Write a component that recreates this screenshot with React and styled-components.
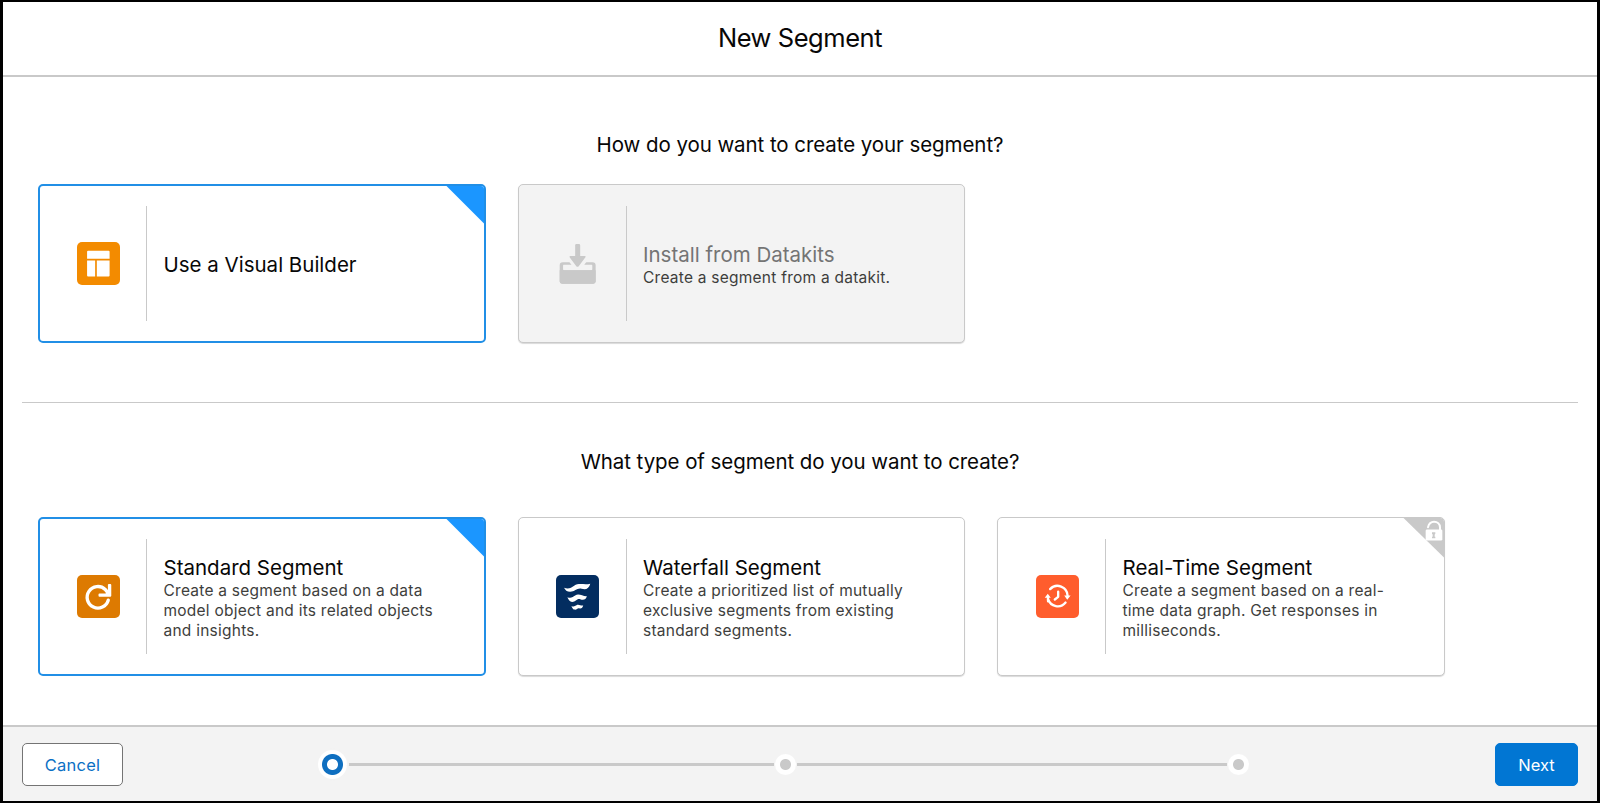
import React from 'react'
import styled, { createGlobalStyle } from 'styled-components'

const VisualBuilderIcon = () => (
  <Svg viewBox="0 0 128 128">
    <path fill="#fff" d="M33 26h61a3 3 0 0 1 3 3v21H30V29a3 3 0 0 1 3-3zM30 55h24v48H33a3 3 0 0 1-3-3zM59 55h38v45a3 3 0 0 1-3 3H59z" />
  </Svg>
)

const DatakitIcon = () => (
  <Svg viewBox="0 0 128 128">
    <g fill="#c9c9c9">
      <path d="M57 10q0-4 4-4h7q4 0 4 4v32h14q4 1 1 4L67 73q-3 2-6 0L41 46q-2-4 1-4h15z" />
      <path d="M20 60h20l6 8H23q-2 0-2 3v10q0 3 3 3h81q3 0 3-3V71q0-3-2-3H84l6-8h19q9 0 9 9v48q0 7-7 7H18q-7 0-7-7V69q0-9 9-9z" />
      <path d="M11 84h107v33q0 7-7 7H18q-7 0-7-7z" />
    </g>
  </Svg>
)

const RefreshIcon = () => (
  <Svg viewBox="0 0 128 128">
    <path d="M93 75A32 32 0 1 1 84 43L93 54" fill="none" stroke="#fff" strokeWidth="10" strokeLinecap="round" />
    <path fill="#fff" d="M92 29q0-2 3-2h4q3 0 3 3v32q0 3-3 3H67q-3 0-3-3v-4q0-3 3-3h18l7-8z" />
  </Svg>
)

const WaterfallIcon = () => (
  <Svg viewBox="0 0 128 128">
    <g fill="#fff">
      <path d="M24 38C36 43 45 39 54 32C69 22 84 31 102 26C98 40 90 45 76 41C62 38 57 50 42 50C33 50 27 45 24 38z" />
      <path d="M34 66C44 70 50 66 57 61C68 53 79 64 92 63C89 73 82 76 72 72C62 69 59 80 48 80C41 79 37 74 34 66z" />
      <path d="M46 92C52 95 56 93 61 90C67 86 73 92 81 91C79 98 75 101 69 99C64 97 62 104 56 103C51 103 48 98 46 92z" />
    </g>
  </Svg>
)

const RealTimeIcon = () => (
  <Svg viewBox="0 0 128 128">
    <g fill="none" stroke="#fff" strokeWidth="7" strokeLinecap="round" strokeLinejoin="round">
      <path d="M36 78A30 30 0 0 1 36 66M42 42A30 30 0 0 1 94 62M88 82A30 30 0 0 1 36 72" />
      <path d="M66 50V65L56 73" />
    </g>
    <path fill="#fff" d="M26 68L35 56L44 68zM84 61H103L93 74z" />
  </Svg>
)

const LockIcon = () => (
  <LockSvg viewBox="0 0 54 62">
    <path d="M9 21C12 9 19 5 27 5C37 5 45 11 45 22V30" fill="none" stroke="#fff" strokeWidth="6" strokeLinecap="round" />
    <rect x="2" y="28" width="50" height="33" rx="4" fill="#fff" />
    <path d="M21 36h10v5l-2 2v7h2v4H21v-4h2v-7l-2-2z" fill="#c9c9c9" />
  </LockSvg>
)

const methods = [
  { title: 'Use a Visual Builder', icon: <VisualBuilderIcon />, color: '#f38b00', selected: true },
  {
    title: 'Install from Datakits',
    lines: ['Create a segment from a datakit.'],
    icon: <DatakitIcon />,
    color: 'transparent',
    disabled: true
  }
]

const types = [
  {
    title: 'Standard Segment',
    lines: ['Create a segment based on a data', 'model object and its related objects', 'and insights.'],
    icon: <RefreshIcon />,
    color: '#dd7a01',
    selected: true
  },
  {
    title: 'Waterfall Segment',
    lines: ['Create a prioritized list of mutually', 'exclusive segments from existing', 'standard segments.'],
    icon: <WaterfallIcon />,
    color: '#032d60'
  },
  {
    title: 'Real-Time Segment',
    lines: ['Create a segment based on a real-', 'time data graph. Get responses in', 'milliseconds.'],
    icon: <RealTimeIcon />,
    color: '#ff5d2d',
    locked: true
  }
]

const OptionCard = ({ title, lines = [], icon, color, selected, disabled, locked }) => (
  <Card $selected={selected} $disabled={disabled}>
    <IconCell>
      <IconTile $color={color}>{icon}</IconTile>
    </IconCell>
    <CardText>
      <CardTitle $disabled={disabled}>{title}</CardTitle>
      {lines.map((line) => <CardLine key={line}>{line}</CardLine>)}
    </CardText>
    {(selected || locked) && <Corner $selected={selected} />}
    {locked && <LockIcon />}
  </Card>
)

const App = () => {
  return (
    <Modal>
      <GlobalStyle />
      <Header>
        <Heading>New Segment</Heading>
      </Header>
      <Main>
        <Question>How do you want to create your segment?</Question>
        <Cards>
          {methods.map((item) => <OptionCard key={item.title} {...item} />)}
        </Cards>
        <Divider />
        <Question $second>What type of segment do you want to create?</Question>
        <Cards>
          {types.map((item) => <OptionCard key={item.title} {...item} />)}
        </Cards>
      </Main>
      <Footer>
        <Button>Cancel</Button>
        <Steps>
          <Step $active />
          <StepLine />
          <Step />
          <StepLine />
          <Step />
        </Steps>
        <Button $primary>Next</Button>
      </Footer>
    </Modal>
  )
}

export default App

const GlobalStyle = createGlobalStyle`
  * {
    box-sizing: border-box;
  }
  body {
    margin: 0;
    background: #fff;
    font-family: Inter, "Liberation Sans", sans-serif;
  }
  h1, h2, h3, p {
    margin: 0;
    font-weight: 400;
    white-space: nowrap;
  }
`

const Modal = styled.div`
  display: flex;
  flex-direction: column;
  width: 1600px;
  height: 803px;
  border: 3px solid #000;
  border-top-width: 2px;
  border-bottom-width: 2px;
  overflow: hidden;
`

const Header = styled.header`
  display: flex;
  align-items: center;
  justify-content: center;
  height: 75px;
  padding-bottom: 1px;
  border-bottom: 2px solid #c9c9c9;
`

const Heading = styled.h1`
  font-size: 25.5px;
  line-height: 34px;
  letter-spacing: -0.45px;
  color: #080707;
`

const Main = styled.main`
  flex: 1;
  padding: 55px 19px 0;
`

const Question = styled.h2`
  font-size: 20.5px;
  line-height: 26px;
  letter-spacing: -0.07px;
  text-align: center;
  color: #080707;
  margin-bottom: ${({ $second }) => ($second ? '42px' : '26px')};
`

const Cards = styled.section`
  display: flex;
  gap: 32px;
  padding-left: 16px;
`

const Card = styled.article`
  position: relative;
  display: flex;
  align-items: center;
  width: 447.5px;
  height: 159px;
  border-radius: 5px;
  border: ${({ $selected }) => ($selected ? '2px solid #218fe6' : '1px solid #c9c9c9')};
  background: ${({ $disabled }) => ($disabled ? '#f3f3f3' : '#fff')};
  box-shadow: ${({ $selected }) => ($selected ? 'none' : '0 1px 1px rgba(0, 0, 0, 0.15)')};
  padding-left: ${({ $selected }) => ($selected ? '0' : '1px')};
  overflow: hidden;
`

const IconCell = styled.div`
  display: flex;
  align-items: center;
  width: 107px;
  height: 115px;
  padding-left: 36.6px;
  border-right: 1px solid #c9c9c9;
`

const IconTile = styled.div`
  width: 43px;
  height: 43px;
  border-radius: 5px;
  background: ${({ $color }) => $color};
`

const Svg = styled.svg`
  display: block;
  width: 43px;
  height: 43px;
`

const CardText = styled.div`
  padding: 3px 0 0 16.5px;
`

const CardTitle = styled.h3`
  font-size: 20.5px;
  line-height: 26px;
  color: ${({ $disabled }) => ($disabled ? '#747474' : '#080707')};
`

const CardLine = styled.p`
  font-size: 15.5px;
  line-height: 20px;
  letter-spacing: 0.24px;
  color: #3e3e3c;
`

const Corner = styled.span`
  position: absolute;
  top: -1px;
  right: -1px;
  width: ${({ $selected }) => ($selected ? '39px' : '42px')};
  height: ${({ $selected }) => ($selected ? '39px' : '41px')};
  clip-path: polygon(0 0, 100% 0, 100% 100%);
  background: ${({ $selected }) => ($selected ? '#1b96ff' : '#c9c9c9')};
`

const LockSvg = styled.svg`
  position: absolute;
  top: 2px;
  right: 1px;
  width: 18px;
  height: 21px;
`

const Divider = styled.hr`
  height: 1px;
  margin: 59px 0 46px;
  border: 0;
  background: #c9c9c9;
`

const Footer = styled.footer`
  display: flex;
  align-items: center;
  justify-content: space-between;
  height: 76px;
  padding: 0 19px;
  border-top: 2px solid #c9c9c9;
  background: #f3f3f3;
`

const Button = styled.button`
  width: ${({ $primary }) => ($primary ? '83px' : '101px')};
  height: 43px;
  padding: 1px 0 0;
  border: 1px solid ${({ $primary }) => ($primary ? '#0176d3' : '#747474')};
  border-radius: 5px;
  background: ${({ $primary }) => ($primary ? '#0176d3' : '#fff')};
  color: ${({ $primary }) => ($primary ? '#fff' : '#0b6fc4')};
  font-family: inherit;
  font-size: 16.5px;
  letter-spacing: ${({ $primary }) => ($primary ? '0' : '0.2px')};
`

const Steps = styled.div`
  display: flex;
  align-items: center;
  gap: 1px;
  width: 927px;
  margin-right: 48px;
`

const Step = styled.span`
  flex: none;
  width: 21px;
  height: 21px;
  border-radius: 50%;
  background: radial-gradient(circle, #c9c9c9 5px, #fff 6px);
  ${({ $active }) => $active && `
    position: relative;
    width: 29px;
    height: 29px;
    margin: 0 -4px;
    background: radial-gradient(circle, #fff 5px, #0f6fc0 6px, #0f6fc0 10px, #fff 11px);
    box-shadow: 0 0 0 2px #f3f3f3;
  `}
`

const StepLine = styled.span`
  flex: 1;
  height: 3px;
  background: #c9c9c9;
`
